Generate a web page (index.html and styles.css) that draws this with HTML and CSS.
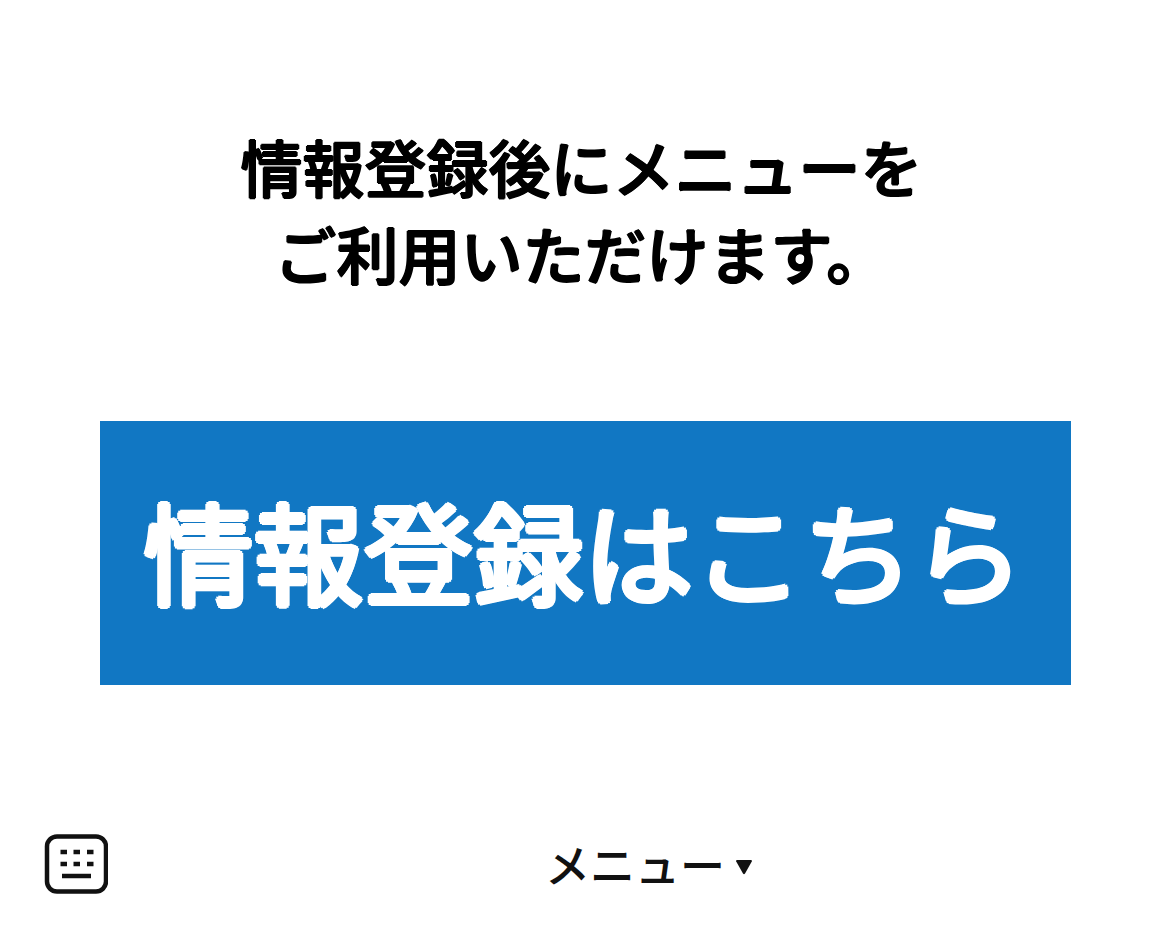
FILE: index.html
```html
<!DOCTYPE html>
<html lang="ja">
<head>
    <meta charset="UTF-8">
    <meta name="viewport" content="width=device-width, initial-scale=1.0">
    <title>メニュー</title>
    <link rel="stylesheet" href="styles.css">
</head>
<body>
    <main class="content">
        <h1 class="message">情報登録後にメニューを<br>ご利用いただけます。</h1>
        <a class="btn-register" href="#register">情報登録はこちら</a>
    </main>
    <footer class="menu-bar">
        <button type="button" class="btn-keyboard" aria-label="キーボード">
            <svg viewBox="0 0 64 60" width="64" height="60" fill="none" stroke="#111">
                <rect x="3" y="2.500" width="59" height="55" rx="10" stroke-width="4.500"/>
                <path d="M16.500 18h6.500M29.500 18h6.500M43 18h6.500M16.500 30h6.500M29.500 30h6.500M43 30h6.500" stroke-width="4.500"/>
                <path d="M18 42h29" stroke-width="4.500"/>
            </svg>
        </button>
        <button type="button" class="btn-menu">
            メニュー
            <svg viewBox="0 0 18 24" width="18" height="24" fill="#111">
                <path d="M2 8h14q1.500 0 .8 1.500L10 21.500q-1 1.500-2 0L1.200 9.500Q.5 8 2 8z"/>
            </svg>
        </button>
    </footer>
</body>
</html>
```
FILE: styles.css
```css
* {
    box-sizing: border-box;
}
body {
    margin: 0;
    min-height: 100vh;
    display: flex;
    flex-direction: column;
    background: #fff;
    color: #000;
    font-family: "Noto Sans CJK JP", sans-serif;
}
.content {
    flex: 1;
    padding: 123px 99px 0 100px;
}
/* the ring of shadows thickens the strokes and rounds their ends */
.message {
    margin: 0 8px 124px 0;
    font-size: 62px;
    font-weight: 500;
    line-height: 87px;
    text-align: center;
    text-shadow: 1px 0 #000, -1px 0 #000, 0 1px #000, 0 -1px #000;
}
.btn-register {
    display: block;
    padding: 48px 4px 56px 0;
    background: #1177c3;
    color: #fff;
    font-size: 110px;
    font-weight: 400;
    line-height: 160px;
    text-align: center;
    text-decoration: none;
    white-space: nowrap;
    text-shadow: 3px 0 #fff, -3px 0 #fff, 0 3px #fff, 0 -3px #fff,
        2px 2px #fff, -2px 2px #fff, 2px -2px #fff, -2px -2px #fff;
}
.menu-bar {
    display: grid;
    grid-template-columns: 64px 1fr;
    gap: 20px;
    align-items: center;
    height: 160px;
    padding-left: 44px;
}
button {
    padding: 0;
    border: none;
    background: none;
    color: #111;
    font-family: inherit;
    cursor: pointer;
}
.btn-keyboard svg {
    display: block;
}
.btn-menu {
    display: flex;
    align-items: center;
    justify-content: center;
    gap: 10px;
    font-size: 45px;
    font-weight: 500;
    line-height: 64px;
}
```
